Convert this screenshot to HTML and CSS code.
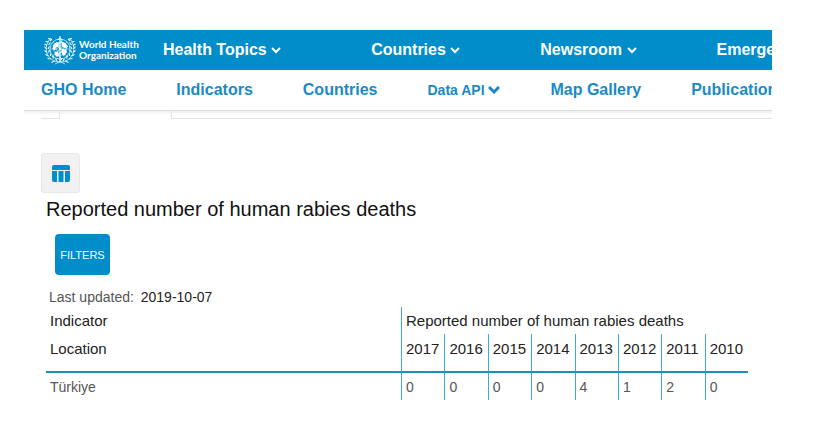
FILE: index.html
```html
<!DOCTYPE html>
<html lang="en">
<head>
    <meta charset="UTF-8">
    <meta name="viewport" content="width=device-width, initial-scale=1">
    <title>Reported number of human rabies deaths</title>
    <link rel="stylesheet" href="styles.css">
</head>
<body>
    <header class="site-header">
        <div class="top-bar">
            <a class="logo" href="#">
                <svg class="emblem" viewBox="0 0 64 60" fill="none" stroke="#fff" stroke-width="1.4" aria-hidden="true">
                    <!-- globe -->
                    <circle cx="32" cy="28" r="20"/>
                    <circle cx="32" cy="28" r="13" stroke-width="1"/>
                    <circle cx="32" cy="28" r="7" stroke-width="1"/>
                    <path stroke-width="1" d="M12 28h40M18 14l28 28M46 14L18 42"/>
                    <path fill="#fff" stroke="none" d="M18 20l7-6 5 2-1 6-5 3-2 6-5-3zM35 13l8 3 5 7-3 4-6-2-4-5zM36 28l8 1 2 5-6 8-4-3zM22 33l6 1 2 6-4 4-5-5z"/>
                    <!-- staff and snake -->
                    <path stroke-width="2.4" d="M32 2v54"/>
                    <path stroke-width="2" d="M27 10c2-4 9-3 9 1s-9 5-9 10 10 5 10 10-9 5-9 9 7 4 7 8-4 4-5 6"/>
                    <!-- laurel branches -->
                    <path d="M14 6C3 16 1 34 11 45c5 6 12 8 19 9M50 6c11 10 13 28 3 39-5 6-12 8-19 9"/>
                    <path stroke-width="2.2" d="M13 8l-5-1M9 14l-6-1M6 21l-5-3M5 28l-4-5M6 35l-5-4M9 42l-6-3M14 48l-7-1M21 52l-6 3M12 12l4-4M9 20l4-5M8 28l3-5M9 35l2-5M13 42l0-5M19 47l-2-5M26 52l-3-5"/>
                    <path stroke-width="2.2" d="M51 8l5-1M55 14l6-1M58 21l5-3M59 28l4-5M58 35l5-4M55 42l6-3M50 48l7-1M43 52l6 3M52 12l-4-4M55 20l-4-5M56 28l-3-5M55 35l-2-5M51 42l0-5M45 47l2-5M38 52l3-5"/>
                    <path d="M30 54l-8 4M34 54l8 4"/>
                </svg>
                <span class="logo-text">World Health<br>Organization</span>
            </a>
            <nav class="main-nav" aria-label="Main">
                <a class="wide" href="#">Health Topics <svg class="chevron" viewBox="0 0 10 8"><path d="M1 2l4 4 4-4"/></svg></a>
                <a href="#">Countries <svg class="chevron" viewBox="0 0 10 8"><path d="M1 2l4 4 4-4"/></svg></a>
                <a href="#">Newsroom <svg class="chevron" viewBox="0 0 10 8"><path d="M1 2l4 4 4-4"/></svg></a>
                <a href="#">Emergencies</a>
            </nav>
        </div>
        <nav class="sub-nav" aria-label="Global Health Observatory">
            <a href="#">GHO Home</a>
            <a href="#">Indicators</a>
            <a href="#">Countries</a>
            <a class="small" href="#">Data API <svg class="chevron thick" viewBox="0 0 12 8"><path d="M1 1l5 5 5-5"/></svg></a>
            <a href="#">Map Gallery</a>
            <a href="#">Publications</a>
        </nav>
    </header>

    <div class="tab-edges">
        <div class="tab"></div>
        <div class="panel"></div>
    </div>

    <main class="content">
        <button class="view-button" type="button" aria-label="Table view">
            <svg viewBox="0 0 18 17" fill="#008dc9">
                <path d="M2 0h14q2 0 2 2v3H0V2q0-2 2-2z"/>
                <path d="M0 6h5v11H2q-2 0-2-2zM6.5 6h5v11h-5zM13 6h5v9q0 2-2 2h-3z"/>
            </svg>
        </button>
        <h1>Reported number of human rabies deaths</h1>
        <button class="filters" type="button">FILTERS</button>
        <p class="updated">Last updated: <time datetime="2019-10-07">2019-10-07</time></p>

        <table>
            <thead>
                <tr class="indicator">
                    <th class="label" scope="row">Indicator</th>
                    <th colspan="8" scope="colgroup">Reported number of human rabies deaths</th>
                </tr>
                <tr class="years">
                    <th class="label" scope="col">Location</th>
                    <th scope="col">2017</th>
                    <th scope="col">2016</th>
                    <th scope="col">2015</th>
                    <th scope="col">2014</th>
                    <th scope="col">2013</th>
                    <th scope="col">2012</th>
                    <th scope="col">2011</th>
                    <th scope="col">2010</th>
                </tr>
            </thead>
            <tbody>
                <tr>
                    <th class="label" scope="row">Türkiye</th>
                    <td>0</td>
                    <td>0</td>
                    <td>0</td>
                    <td>0</td>
                    <td>4</td>
                    <td>1</td>
                    <td>2</td>
                    <td>0</td>
                </tr>
            </tbody>
        </table>
    </main>
</body>
</html>
```
FILE: styles.css
```css
* {
    box-sizing: border-box;
}
body {
    margin: 0;
    padding: 30px 48px 30px 24px;
    background: #fff;
    color: #222;
    font-family: "Liberation Sans", Arial, sans-serif;
}
a {
    text-decoration: none;
    white-space: nowrap;
}

/* header */
.site-header {
    overflow: hidden;
    border-bottom: 1px solid #ddd;
}
.top-bar {
    display: flex;
    align-items: center;
    height: 40px;
    padding-left: 20px;
    background: #008dc9;
}
.logo {
    display: flex;
    flex: none;
    align-items: center;
    gap: 3px;
    width: 119px;
    color: #fff;
}
.emblem {
    flex: none;
    width: 32px;
    height: 30px;
}
.logo-text {
    font-family: Lato, "Open Sans", sans-serif;
    font-size: 10px;
    font-weight: bold;
    line-height: 11px;
}
.main-nav {
    display: flex;
    gap: 80px;
}
.main-nav a {
    color: #fff;
    font-size: 16px;
    font-weight: bold;
}
.main-nav .wide {
    margin-right: 10px;
}
.chevron {
    width: 10px;
    height: 8px;
    vertical-align: 1px;
    fill: none;
    stroke: currentColor;
    stroke-width: 2;
}
.chevron.thick {
    width: 12px;
    stroke-width: 3;
}
.sub-nav {
    display: flex;
    align-items: center;
    gap: 50px;
    height: 40px;
    padding-left: 17px;
}
.sub-nav a {
    color: #1a8ac6;
    font-size: 16px;
    font-weight: bold;
}
.sub-nav .small {
    font-size: 14px;
}

/* bottom edges of the tabs under the header */
.tab-edges {
    display: flex;
    gap: 111px;
    height: 8px;
    padding-left: 17px;
    background: linear-gradient(#eee, #fff 4px);
}
.tab {
    width: 19px;
    border: solid #e4e4e4;
    border-width: 0 1px 1px 0;
}
.panel {
    flex: 1;
    border: solid #e4e4e4;
    border-width: 0 0 1px 1px;
}

/* content */
.content {
    padding: 34px 24px 0 22px;
}
.view-button {
    display: flex;
    align-items: center;
    justify-content: center;
    width: 39px;
    height: 40px;
    margin-left: -5px;
    padding: 0;
    border: 1px solid #e8e8e8;
    border-radius: 3px;
    background: #f1f1f1;
}
.view-button svg {
    width: 18px;
    height: 17px;
}
h1 {
    margin: 4px 0 13px;
    color: #111;
    font-size: 20px;
    font-weight: normal;
    line-height: 24px;
}
.filters {
    display: block;
    width: 55px;
    height: 41px;
    margin-left: 9px;
    padding: 0;
    border: none;
    border-radius: 4px;
    background: #008dc9;
    color: #fff;
    font-family: inherit;
    font-size: 11px;
}
.updated {
    margin: 12px 0 0 3px;
    color: #555;
    font-size: 14px;
    line-height: 20px;
}
.updated time {
    margin-left: 3px;
    color: #222;
}

table {
    width: 100%;
    table-layout: fixed;
    border-spacing: 0;
}
th, td {
    height: 27px;
    padding: 0 0 0 4px;
    border-left: 1px solid #3aaae0;
    color: #555;
    font-size: 14px;
    font-weight: normal;
    text-align: left;
}
.label {
    width: 355px;
    border-left: none;
}
thead th {
    color: #222;
    font-size: 15px;
}
.years th {
    height: 39px;
    padding-bottom: 8px;
    border-bottom: 2px solid #1a8fc0;
}
```
